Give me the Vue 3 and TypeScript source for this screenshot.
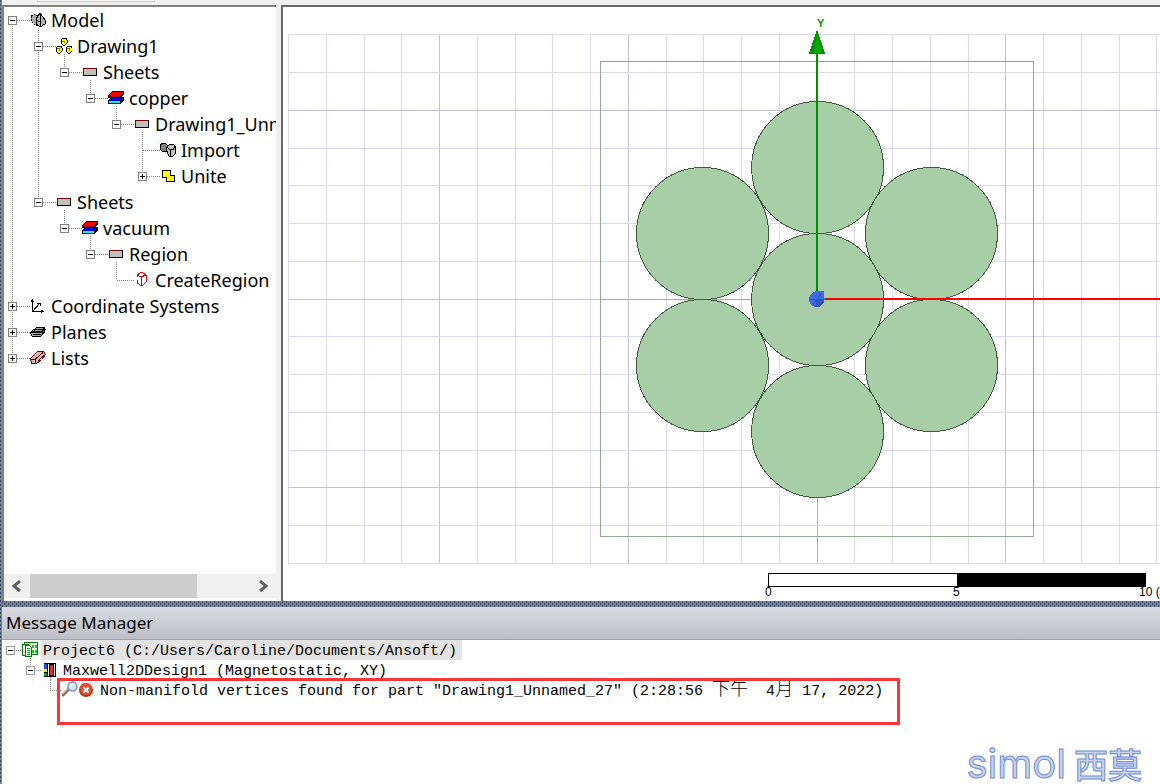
<script setup lang="ts">
type Expander = 'open' | 'closed' | 'none'

interface TreeNode {
  label: string
  icon: string
  expander: Expander
  /** one flag per ancestor column: true when its line continues through this row */
  rails: boolean[]
  up: boolean
  down: boolean
}

const nodes: TreeNode[] = [
  { label: 'Model', icon: 'model', expander: 'open', rails: [], up: false, down: true },
  { label: 'Drawing1', icon: 'parts', expander: 'open', rails: [true], up: true, down: true },
  { label: 'Sheets', icon: 'sheet', expander: 'open', rails: [true, true], up: true, down: false },
  { label: 'copper', icon: 'material', expander: 'open', rails: [true, true, false], up: true, down: false },
  { label: 'Drawing1_Unnamed_27', icon: 'sheet', expander: 'open', rails: [true, true, false, false], up: true, down: false },
  { label: 'Import', icon: 'import', expander: 'none', rails: [true, true, false, false, false], up: true, down: true },
  { label: 'Unite', icon: 'unite', expander: 'closed', rails: [true, true, false, false, false], up: true, down: false },
  { label: 'Sheets', icon: 'sheet', expander: 'open', rails: [true], up: true, down: false },
  { label: 'vacuum', icon: 'material', expander: 'open', rails: [true, false], up: true, down: false },
  { label: 'Region', icon: 'sheet', expander: 'open', rails: [true, false, false], up: true, down: false },
  { label: 'CreateRegion', icon: 'region', expander: 'none', rails: [true, false, false, false], up: true, down: false },
  { label: 'Coordinate Systems', icon: 'axes', expander: 'closed', rails: [], up: true, down: true },
  { label: 'Planes', icon: 'planes', expander: 'closed', rails: [], up: true, down: true },
  { label: 'Lists', icon: 'lists', expander: 'closed', rails: [], up: true, down: false },
]

const step = 37.75
const columns = Array.from({ length: 60 }, (_, i) => ({
  at: Math.round(5 + i * step) + 0.5,
  kind: i === 14 ? 'origin' : i % 5 === 4 ? 'major' : 'minor',
}))
const rows = Array.from({ length: 15 }, (_, i) => ({
  at: Math.round(27.4 + i * step) + 0.5,
  kind: i % 5 === 2 ? 'major' : 'minor',
}))
const gridBottom = rows[rows.length - 1].at

const conductors = [
  [534, 160], [648, 226], [648, 358], [534, 424], [419, 358], [419, 226], [534, 292],
]
</script>

<template>
  <div class="app">
    <div class="toolbar"><span class="toolbar-well"></span></div>

    <main class="workspace">
      <nav class="tree-pane" aria-label="Model tree">
        <ul class="tree">
          <li v-for="(node, n) in nodes" :key="n" class="node">
            <svg v-for="(rail, r) in node.rails" :key="r" width="26" height="26" aria-hidden="true">
              <path v-if="rail" class="dots" d="M8.5 0V26" />
            </svg>
            <button class="expander" type="button" :aria-label="'Toggle ' + node.label">
              <svg width="26" height="26" aria-hidden="true">
                <path v-if="node.up" class="dots" d="M8.5 0V12" />
                <path v-if="node.down" class="dots" d="M8.5 12V26" />
                <path class="dots" d="M9 12.5H26" />
                <template v-if="node.expander !== 'none'">
                  <rect x="4.5" y="8.5" width="8" height="8" fill="#fff" stroke="#808080" />
                  <path d="M6 12.5H11" stroke="#000" />
                  <path v-if="node.expander === 'closed'" d="M8.5 10V15" stroke="#000" />
                </template>
              </svg>
            </button>
            <svg width="16" height="26" shape-rendering="crispEdges" aria-hidden="true">
              <path v-if="node.expander === 'open'" class="dots" d="M8.5 20V26" />
              <g v-if="node.icon === 'model'" stroke="#000">
                <path d="M1 8L5 6L9 9V16L6 18L2 14Z" fill="#aaa" stroke-dasharray="2 1" />
                <path d="M10 5L15 12V16L10 19L6 16V11Z" fill="#b4b4b4" />
                <path d="M10 5V19M6 12L10 14" fill="none" />
              </g>
              <g v-else-if="node.icon === 'parts'" stroke="#000" fill="#ffff00">
                <path d="M6 5L8 4H10L11 6V9L9 11H7L5 9V6Z" />
                <path d="M1 13L3 12H5L6 14V17L4 19H2L0 17V14Z" />
                <path d="M11 13L13 12H15L16 14V17L14 19H12L10 17V14Z" />
                <path d="M6 7H8V9M1 14.5H3V17M11 14.5H13V17" fill="none" stroke="#808000" />
              </g>
              <g v-else-if="node.icon === 'sheet'">
                <rect x="1.5" y="8.5" width="13" height="7" fill="#c0c0c0" stroke="#000" />
                <path d="M1 8.5H14M1.5 8V15" stroke="#800000" />
              </g>
              <g v-else-if="node.icon === 'material'">
                <path d="M3 11H16V14L13 18H0V15Z" fill="#000" />
                <path d="M4 11H15L12 15H1Z" fill="#0000ff" />
                <path d="M1 15H12V17H1Z" fill="#00ffff" />
                <path d="M4 5H16V8L13 12H0V9Z" fill="#000" />
                <path d="M4 6H15L12 10H1Z" fill="#ff0000" />
                <path d="M1 10H12V11H1Z" fill="#c00000" />
              </g>
              <g v-else-if="node.icon === 'import'" stroke="#000">
                <path d="M.5 6.500L2.500 5.500H5.500L7.500 7.500V13.500H2.500L.5 11.500Z" fill="#808080" />
                <path d="M6.500 9.500L9.500 6.500H13.500L15.500 8.500V15.500L12.500 18.500H9.500L7.500 15.500Z" fill="#c0c0c0" />
                <path d="M7 9.500L10 11.500H13L15 8.500M10.500 11.500V18" fill="none" />
              </g>
              <path v-else-if="node.icon === 'unite'" d="M2.5 6.5H10.5V11.5H14.5V17.5H6.5V13.5H2.5Z" fill="#ffff00" stroke="#000" />
              <g v-else-if="node.icon === 'region'" stroke="#ff0000" fill="none">
                <path d="M3 7L8 4L12 7V14L8 18L3 15" />
                <path d="M3 7L7 9L12 7M7.5 9V18M3.5 7V9M3.5 12V15" stroke="#d00000" />
              </g>
              <g v-else-if="node.icon === 'axes'" stroke="#000" fill="none">
                <path d="M2.5 6V17.5H13M1 8L2.5 6L4 8M11 16L13 17.5L11 19M3 17L10 9M7 9.500H10.500V12" />
              </g>
              <g v-else-if="node.icon === 'planes'" stroke="#000" fill="#aaa">
                <path d="M.5 13.500L3.500 9.500H15.500L12.500 14.500L10.500 16.500H2.500Z" />
                <path d="M3.500 11.500L6.500 7.500H14.500L12.500 11.500Z" />
                <path d="M0 12.500H15M3 14.500H11M6 9.500H13" fill="none" />
              </g>
              <g v-else stroke="#800000" fill="#c0c0c0">
                <path d="M.5 12.500L7.500 5.500H13.500L15.500 8.500L11.500 13.500L6.500 17.500H1.500Z" />
                <path d="M1 13.500H5L13 6.500M5.500 13V17M8 15L14 9" fill="none" />
              </g>
            </svg>
            <span class="label">{{ node.label }}</span>
          </li>
        </ul>
        <div class="scrollbar">
          <button class="arrow" type="button" aria-label="Scroll left">
            <svg width="10" height="12" aria-hidden="true"><path d="M8 1L2 6L8 11" /></svg>
          </button>
          <div class="track"><div class="thumb"></div></div>
          <button class="arrow" type="button" aria-label="Scroll right">
            <svg width="10" height="12" aria-hidden="true"><path d="M2 1L8 6L2 11" /></svg>
          </button>
        </div>
      </nav>

      <section class="viewport" aria-label="Drawing">
        <svg width="100%" height="100%">
          <g shape-rendering="crispEdges">
            <path v-for="(c, i) in columns" :key="'c' + i" :class="c.kind" :d="`M${c.at} 27V${gridBottom}`" />
            <path v-for="(r, i) in rows" :key="'r' + i" :class="r.kind" :d="`M5 ${r.at}H2300`" />
            <path d="M317 292.5H534" stroke="#94bb94" />
            <rect x="317.5" y="54.5" width="433" height="475" fill="none" stroke="#8fac8f" />
            <circle v-for="(c, i) in conductors" :key="'k' + i" :cx="c[0] + 0.5" :cy="c[1] + 0.5" r="66" fill="#a8cea8" stroke="#3f5c3f" />
            <path d="M534 46V292" stroke="#009000" stroke-width="2" />
            <path d="M534 292H2300" stroke="#ff0000" stroke-width="2" />
            <path d="M534 22L542 47H526Z" fill="#009000" />
            <path d="M534 24L538 46H531Z" fill="#00aa00" />
            <path d="M530 285L534 284H541V289L542 292L540 297L536 300H532L527 297L526 292L527 288Z" fill="#4169e1" />
            <path d="M534 292L542 292L540 297L536 300H532Z" fill="#3355c4" />
            <path d="M526 292L534 292L530 298M534 292L539 286" fill="none" stroke="#3157c8" />
          </g>
          <g shape-rendering="crispEdges">
            <rect x="485.5" y="566.5" width="377" height="13" fill="#fff" stroke="#000" />
            <rect x="674" y="566" width="189" height="14" fill="#000" />
          </g>
          <text class="axis-text" x="534" y="20">Y</text>
          <g class="scale-text">
            <text x="482" y="589">0</text>
            <text x="670" y="589">5</text>
            <text x="856" y="589">10 (mm)</text>
          </g>
        </svg>
      </section>
    </main>

    <div class="splitter"></div>

    <section class="messages">
      <h2 class="title">Message Manager</h2>
      <ul class="log">
        <li class="entry">
          <button type="button" aria-label="Toggle project">
            <svg width="20" height="20" aria-hidden="true">
              <path class="dots" d="M10 10.5H20" />
              <rect x="4.5" y="6.5" width="8" height="8" fill="#fff" stroke="#9a9a9a" />
              <path d="M6 10.5H11" stroke="#000" />
            </svg>
          </button>
          <svg width="19" height="20" shape-rendering="crispEdges" aria-hidden="true">
            <path class="dots" d="M8.5 16V20" />
            <rect x="2.5" y="2.5" width="13" height="12" fill="#fff" stroke="#008000" />
            <path d="M11 5V8M14 5V8M11 10V13M14 10V13" stroke="#00e000" stroke-width="2" />
            <path d="M.5 4.5H6.5V15.5H.5Z" fill="#fff" stroke="#008000" />
            <path d="M3.5 5.5H7.5L9.5 7.5V16.5H3.5Z" fill="#fff" stroke="#008000" />
            <path d="M5 8.5H8M5 10.5H8M5 12.5H8M5 14.5H8" stroke="#00c000" />
          </svg>
          <span class="text selected">Project6 (C:/Users/Caroline/Documents/Ansoft/)</span>
        </li>
        <li class="entry design">
          <button type="button" aria-label="Toggle design">
            <svg width="20" height="20" aria-hidden="true">
              <path class="dots" d="M8.5 0V6M10 10.5H20" />
              <rect x="4.5" y="6.5" width="8" height="8" fill="#fff" stroke="#9a9a9a" />
              <path d="M6 10.5H11" stroke="#000" />
            </svg>
          </button>
          <svg width="19" height="20" shape-rendering="crispEdges" aria-hidden="true">
            <path class="dots" d="M8.5 17V20" />
            <rect x="2" y="3" width="12" height="14" fill="#000" />
            <rect x="2" y="4" width="3" height="5" fill="#2850d0" />
            <rect x="2" y="9" width="3" height="3" fill="#ffe000" />
            <rect x="2" y="13" width="3" height="3" fill="#00b000" />
            <rect x="8" y="5" width="3" height="10" fill="#e03020" />
            <path d="M6.5 4V16M12.5 4V16" stroke="#fff" />
          </svg>
          <span class="text">Maxwell2DDesign1 (Magnetostatic, XY)</span>
        </li>
        <li class="entry error">
          <svg width="20" height="20" aria-hidden="true"><path class="dots" d="M8.5 0V10.5H20" /></svg>
          <svg width="17" height="20" aria-hidden="true">
            <path d="M1 15L7 9" stroke="#a06040" stroke-width="3" stroke-linecap="round" />
            <path d="M1 14L6 9" stroke="#e0b8a8" stroke-width="1" />
            <circle cx="10.500" cy="6.500" r="4.500" fill="#c8e8fa" stroke="#8090b8" stroke-width="1.500" />
            <path d="M8 6L11 4" stroke="#fff" stroke-width="2" />
          </svg>
          <svg width="19" height="20" aria-hidden="true">
            <circle cx="7" cy="10" r="7" fill="#b83010" />
            <circle cx="7" cy="9" r="6" fill="#e05030" />
            <path d="M4.500 7.500L9.500 12.500M9.500 7.500L4.500 12.500" stroke="#fff" stroke-width="2" />
          </svg>
          <span class="text">Non-manifold vertices found for part "Drawing1_Unnamed_27" (2:28:56 <span class="han">下午</span>&nbsp; 4<span class="han">月</span> 17, 2022)</span>
          <span class="highlight"></span>
        </li>
      </ul>
      <div class="brand"><span>simol</span><span class="brand-han">西莫</span></div>
    </section>
  </div>
</template>

<style>
body {
  margin: 0;
  background: #f0f0f0;
}
</style>

<style scoped>
.app {
  display: flex;
  flex-direction: column;
  box-sizing: border-box;
  min-height: 100vh;
  padding-left: 2px;
  overflow: hidden;
  color: #000;
  font-family: "Noto Sans", "Noto Sans CJK SC", sans-serif;
}
.app,
.splitter {
  background-color: #848484;
  background-image:
    conic-gradient(from 270deg at 1px 2px, #2d4a7a 90deg, transparent 90deg),
    conic-gradient(from 270deg at 1px 2px, #2d4a7a 90deg, transparent 90deg);
  background-position: 0 0, 2px 2px;
  background-size: 4px 4px;
}
.toolbar {
  height: 5px;
  padding-left: 35px;
  background: #f0f0f0;
}
.toolbar-well {
  display: block;
  width: 116px;
  height: 1px;
  border: solid #c8ccd6;
  border-width: 0 1px 1px;
  background: #f6f6f6;
}
.workspace {
  display: flex;
  flex: 1;
  min-height: 0;
  background: #f0f0f0;
}
ul {
  margin: 0;
  padding: 0;
  list-style: none;
}
button {
  display: block;
  margin: 0;
  padding: 0;
  border: 0;
  background: none;
}
svg {
  display: block;
  flex: none;
}
.tree-pane {
  display: flex;
  flex: none;
  flex-direction: column;
  box-sizing: border-box;
  width: 274px;
  border-top: 2px solid #808080;
  border-left: 2px solid #808080;
  background: #fff;
}
.tree {
  flex: 1;
  padding-top: 1px;
  overflow: hidden;
}
.node {
  display: flex;
  height: 26px;
}
.dots {
  fill: none;
  stroke: #808080;
  stroke-dasharray: 1 1;
  shape-rendering: crispEdges;
}
.label {
  padding-left: 5px;
  font-size: 18px;
  line-height: 24px;
  white-space: nowrap;
}
.scrollbar {
  display: flex;
  height: 24px;
  margin-bottom: 3px;
  background: #f0f0f0;
}
.arrow {
  display: grid;
  flex: none;
  place-items: center;
  width: 26px;
}
.arrow path {
  fill: none;
  stroke: #606060;
  stroke-width: 3px;
}
.track {
  flex: 1;
}
.thumb {
  width: 76%;
  height: 100%;
  background: #cdcdcd;
}
.viewport {
  flex: 1;
  min-width: 0;
  margin-left: 5px;
  border-top: 2px solid #696969;
  border-left: 2px solid #696969;
  background: #fff;
  overflow: hidden;
}
.minor {
  stroke: #dadaec;
}
.major {
  stroke: #c2c2e0;
}
.origin {
  stroke: #d89aa4;
}
.scale-text {
  font-family: "Liberation Sans", sans-serif;
  font-size: 12px;
}
.axis-text {
  fill: #009000;
  font-family: "Liberation Sans", sans-serif;
  font-size: 11px;
  font-weight: 700;
}
.splitter {
  height: 6px;
}
.messages {
  display: flex;
  flex-direction: column;
  min-height: 177px;
  background: #fff;
}
.title {
  margin: 0;
  padding: 0 4px;
  border-bottom: 1px solid #a0a0a4;
  background: linear-gradient(#d8dbe1, #bcbfc5);
  font-size: 17px;
  font-weight: 400;
  line-height: 32px;
}
.log {
  flex: 1;
}
.entry {
  display: flex;
  position: relative;
  width: fit-content;
  height: 20px;
}
.design {
  padding-left: 20px;
}
.error {
  padding-left: 40px;
}
.text {
  padding: 0 5px 0 2px;
  font-family: "Liberation Mono", "Noto Sans CJK SC", monospace;
  font-size: 15px;
  line-height: 23px;
  white-space: nowrap;
}
.selected {
  background: #e3e3e3;
}
.han {
  font-family: "Noto Sans CJK SC", sans-serif;
  font-size: 18px;
  font-weight: 300;
  line-height: 1px;
}
.highlight {
  position: absolute;
  top: -2px;
  right: -12px;
  left: 55px;
  height: 41px;
  border: 3px solid #fb3737;
}
.brand {
  display: flex;
  align-items: center;
  align-self: flex-end;
  gap: 8px;
  height: 38px;
  margin: 0 18px 1px 0;
  color: #c8d4f0;
  font-family: Inter, sans-serif;
  font-size: 40px;
  line-height: 38px;
  -webkit-text-stroke: 1px #6c8cd2;
}
.brand-han {
  font-family: "Noto Sans CJK SC", sans-serif;
  font-size: 34px;
  font-weight: 500;
}
</style>
